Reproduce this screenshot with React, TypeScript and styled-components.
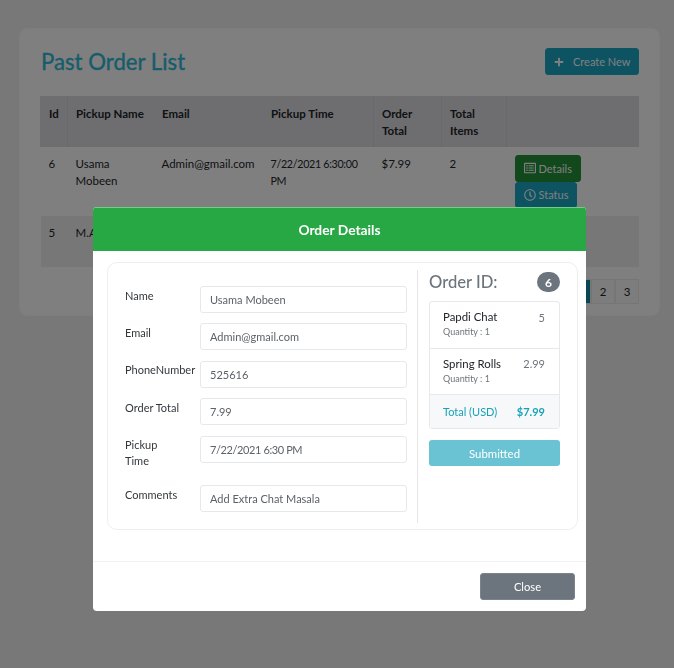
import React from "react";
import styled, { createGlobalStyle } from "styled-components";
import { FaPlus, FaRegClock, FaRegListAlt } from "react-icons/fa";

const Global = createGlobalStyle`
  html, body { margin: 0; padding: 0; height: 100%; }
  body { background: #f0f0f0; font-family: "Lato", "Noto Sans", sans-serif; font-size: 11.5px; color: #212529; overflow: hidden; }
  * { box-sizing: border-box; }
`;

const Page = styled.div`
  padding: 28px 14px 0 19px;
`;
const Card = styled.section`
  width: 641px;
  height: 288px;
  padding: 19px 20px 0 20px;
  background: #fff;
  border: 1px solid #fafafa;
  border-radius: 8px;
`;
const CardHead = styled.header`
  display: flex;
  justify-content: space-between;
  align-items: flex-start;
  height: 48px;
`;
const Title = styled.h1`
  margin: 0;
  padding: 0 0 0 1px;
  font-size: 22.2px;
  line-height: 28px;
  font-weight: 400;
  -webkit-text-stroke: 0.35px #2fb9d6;
  color: #2fb9d6;
`;
const CreateButton = styled.button`
  display: flex;
  align-items: center;
  gap: 9px;
  width: 94px;
  height: 27px;
  padding: 0 8px;
  background: #1aa6c4;
  border: 1px solid #1fa9c2;
  border-radius: 3px;
  color: #fff;
  font: inherit;
  font-size: 11px;
  white-space: nowrap;
  svg { flex: none; }
`;
const Table = styled.table`
  width: 598px;
  border-collapse: collapse;
  table-layout: fixed;
  line-height: 17px;
`;
const Th = styled.th<{ $w: number; $sep?: boolean; $single?: boolean }>`
  width: ${(p) => p.$w}px;
  height: 51px;
  padding: 9px 9px 8px 8px;
  background: #dcdde0;
  border-left: 1px solid ${(p) => (p.$sep ? "#d2d3d6" : "#dcdde0")};
  text-align: left;
  vertical-align: top;
  font-weight: 700;
  ${(p) => p.$single && "white-space: nowrap;"}
`;
const Row = styled.tr<{ $striped?: boolean }>`
  background: ${(p) => (p.$striped ? "#eeeeee" : "#fff")};
`;
const Td = styled.td`
  height: 51px;
  padding: 8px 9px 8px 8px;
  vertical-align: top;
`;
const TimeCell = styled(Td)`
  font-size: 10.7px;
  letter-spacing: -0.3px;
`;
const ActionCell = styled.td`
  padding: 8px 9px 8px 8px;
  vertical-align: top;
  height: 69px;
`;
const RowAction = styled.button<{ $tone: string }>`
  display: flex;
  align-items: center;
  gap: 3px;
  height: 26.5px;
  padding: 0 8px;
  background: ${(p) => p.$tone};
  border: 1px solid ${(p) => p.$tone};
  border-radius: 3px;
  color: #fff;
  font: inherit;
  font-size: 11px;
  svg { flex: none; }
`;
const Pager = styled.nav`
  display: flex;
  justify-content: flex-end;
  width: 599px;
  margin-top: 12px;
`;
const PageCell = styled.span<{ $active?: boolean }>`
  display: flex;
  align-items: center;
  justify-content: center;
  width: 24px;
  height: 25px;
  background: ${(p) => (p.$active ? "#0f90a4" : "#fbfbfb")};
  border: 1px solid #ededed;
  color: #212529;
  font-size: 11.5px;
`;
const Backdrop = styled.div`
  position: fixed;
  inset: 0;
  background: rgba(0, 0, 0, 0.5);
  padding: 207px 0 0 93px;
`;
const Modal = styled.div`
  width: 493px;
  height: 404px;
  background: #fff;
  border-radius: 4px;
  overflow: hidden;
  display: flex;
  flex-direction: column;
`;
const ModalHead = styled.h2`
  margin: 0;
  height: 44px;
  flex: none;
  display: flex;
  align-items: center;
  justify-content: center;
  background: #28a745;
  border-top: 1px solid #6fcf87;
  color: #fff;
  font-size: 13.8px;
  font-weight: 700;
`;
const ModalBody = styled.div`
  flex: 1;
  padding: 11px 8px 0 14px;
`;
const Inner = styled.div`
  display: flex;
  width: 471px;
  height: 268px;
  padding: 7px 17px 6px 17px;
  border: 1px solid #eeeeee;
  border-radius: 10px;
`;
const FormColumn = styled.div`
  width: 293px;
  padding: 16px 10px 0 0;
  border-right: 1px solid #e6e6e6;
  flex: none;
`;
const FormRow = styled.div`
  display: grid;
  grid-template-columns: 75px 207px;
  margin-bottom: 10.4px;
`;
const FieldLabel = styled.label<{ $wrap?: boolean }>`
  display: block;
  padding: 1.6px 0 0;
  line-height: 16px;
  color: #33373b;
  font-size: 11px;
  ${(p) => p.$wrap && "height: 39px; width: 50px;"}
`;
const FieldValue = styled.div<{ $tight?: boolean }>`
  height: 27px;
  padding: 0 9px;
  display: flex;
  align-items: center;
  border: 1px solid #e6e8ec;
  border-radius: 3px;
  color: #5c6268;
  font-size: 11px;
  ${(p) => p.$tight && "letter-spacing: -0.4px;"}
`;
const Summary = styled.aside`
  flex: 1;
  padding-left: 11px;
`;
const SummaryHead = styled.div`
  display: flex;
  justify-content: space-between;
  align-items: center;
  height: 24px;
`;
const SummaryTitle = styled.h3`
  margin: 0;
  font-size: 16.6px;
  font-weight: 500;
  color: #6c757d;
`;
const Badge = styled.span`
  display: flex;
  align-items: center;
  justify-content: center;
  width: 23px;
  height: 20px;
  border-radius: 10px;
  background: #6c757d;
  color: #fff;
  font-size: 12px;
  font-weight: 700;
`;
const ItemList = styled.div`
  margin-top: 7px;
  border: 1px solid #e6e8ec;
  border-radius: 3px;
`;
const Item = styled.div`
  display: flex;
  justify-content: space-between;
  height: 46.5px;
  padding: 7px 14px 0 13px;
  border-bottom: 1px solid #e6e8ec;
`;
const ItemName = styled.div`
  font-size: 11.4px;
  line-height: 16px;
  color: #212529;
`;
const ItemQty = styled.div`
  font-size: 9px;
  line-height: 14px;
  color: #6c757d;
`;
const ItemPrice = styled.div<{ $offset: number }>`
  padding-top: ${(p) => p.$offset}px;
  font-size: 11px;
  color: #6c757d;
`;
const TotalRow = styled.div`
  display: flex;
  justify-content: space-between;
  align-items: center;
  height: 33px;
  padding: 0 14px 0 13px;
  background: #f7f8fa;
  color: #17a2b8;
  font-size: 11px;
`;
const SubmittedButton = styled.div`
  display: flex;
  align-items: center;
  justify-content: center;
  height: 26px;
  margin-top: 11px;
  background: #6ac3d3;
  border-radius: 3px;
  color: #fff;
  font-size: 11.4px;
`;
const ModalFoot = styled.footer`
  height: 50px;
  flex: none;
  display: flex;
  justify-content: flex-end;
  padding: 11px 11px 0 0;
  border-top: 1px solid #f2f2f2;
`;
const CloseButton = styled.button`
  width: 95px;
  height: 27px;
  background: #6c757d;
  border: 1px solid #7b848b;
  border-radius: 3px;
  color: #fff;
  font: inherit;
  font-size: 11.2px;
`;

const fields: [string, string][] = [
  ["Name", "Usama Mobeen"],
  ["Email", "Admin@gmail.com"],
  ["PhoneNumber", "525616"],
  ["Order Total", "7.99"],
  ["Pickup Time", "7/22/2021 6:30 PM"],
  ["Comments", "Add Extra Chat Masala"],
];

export default function App() {
  return (
    <>
      <Global />
      <Page>
        <Card>
          <CardHead>
            <Title>Past Order List</Title>
            <CreateButton><FaPlus size={10} /> Create New</CreateButton>
          </CardHead>
          <Table>
            <thead>
              <tr>
                <Th $w={27}>Id</Th>
                <Th $w={86} $sep $single>Pickup Name</Th>
                <Th $w={109}>Email</Th>
                <Th $w={111}>Pickup Time</Th>
                <Th $w={68} $sep>Order Total</Th>
                <Th $w={65} $sep>Total Items</Th>
                <Th $w={132} $sep></Th>
              </tr>
            </thead>
            <tbody>
              <Row>
                <Td>6</Td>
                <Td>Usama Mobeen</Td>
                <Td>Admin@gmail.com</Td>
                <TimeCell>7/22/2021 6:30:00 PM</TimeCell>
                <Td>$7.99</Td>
                <Td>2</Td>
                <ActionCell>
                  <RowAction $tone="#239038"><FaRegListAlt size={12} /> Details</RowAction>
                  <RowAction $tone="#1aa6c4"><FaRegClock size={12} /> Status</RowAction>
                </ActionCell>
              </Row>
              <Row $striped>
                <Td>5</Td>
                <Td>M.Ali Khan</Td>
                <Td>Admin@gmail.com</Td>
                <TimeCell>7/22/2021 6:00:00 PM</TimeCell>
                <Td>$5.00</Td>
                <Td>1</Td>
                <Td />
              </Row>
            </tbody>
          </Table>
          <Pager>
            <PageCell $active>1</PageCell>
            <PageCell>2</PageCell>
            <PageCell>3</PageCell>
          </Pager>
        </Card>
      </Page>
      <Backdrop>
        <Modal>
          <ModalHead>Order Details</ModalHead>
          <ModalBody>
            <Inner>
              <FormColumn>
                {fields.map(([label, value]) => (
                  <FormRow key={label}>
                    <FieldLabel $wrap={label === "Pickup Time"}>{label}</FieldLabel>
                    <FieldValue $tight={label === "Pickup Time"}>{value}</FieldValue>
                  </FormRow>
                ))}
              </FormColumn>
              <Summary>
                <SummaryHead>
                  <SummaryTitle>Order ID:</SummaryTitle>
                  <Badge>6</Badge>
                </SummaryHead>
                <ItemList>
                  <Item>
                    <div>
                      <ItemName>Papdi Chat</ItemName>
                      <ItemQty>Quantity : 1</ItemQty>
                    </div>
                    <ItemPrice $offset={2}>5</ItemPrice>
                  </Item>
                  <Item>
                    <div>
                      <ItemName>Spring Rolls</ItemName>
                      <ItemQty>Quantity : 1</ItemQty>
                    </div>
                    <ItemPrice $offset={1}>2.99</ItemPrice>
                  </Item>
                  <TotalRow>
                    <span>Total (USD)</span>
                    <b>$7.99</b>
                  </TotalRow>
                </ItemList>
                <SubmittedButton>Submitted</SubmittedButton>
              </Summary>
            </Inner>
          </ModalBody>
          <ModalFoot>
            <CloseButton>Close</CloseButton>
          </ModalFoot>
        </Modal>
      </Backdrop>
    </>
  );
}
